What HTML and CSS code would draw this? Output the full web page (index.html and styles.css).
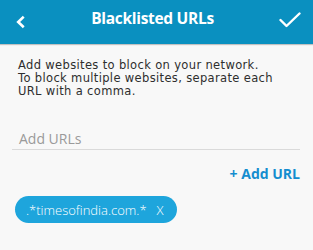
FILE: index.html
```html
<!DOCTYPE html>
<html>
<head>
<meta charset="utf-8">
<link rel="stylesheet" href="styles.css">
</head>
<body>
<div class="app">
  <header class="bar">
    <button class="icon-btn back" aria-label="Back">
      <svg width="12" height="14" viewBox="0 0 12 14"><path d="M8.8 2.6 L4.2 7 L8.8 11.4" fill="none" stroke="#fff" stroke-width="2.6" stroke-linecap="square"/></svg>
    </button>
    <h1 class="title">Blacklisted URLs</h1>
    <button class="icon-btn done" aria-label="Done">
      <svg width="22" height="16" viewBox="0 0 22 16"><path d="M1.5 8 L7.5 14 L20.5 1.5" fill="none" stroke="#fff" stroke-width="2.4" stroke-linecap="round" stroke-linejoin="round"/></svg>
    </button>
  </header>
  <main class="content">
    <p class="desc"><span class="line">Add websites to block on your network.</span><span class="line">To block multiple websites, separate each</span><span class="line">URL with a comma.</span></p>
    <div class="field"><span class="placeholder">Add URLs</span></div>
    <div class="actions"><a class="add">+ Add URL</a></div>
    <div class="chips"><span class="chip"><span class="chip-text">.*timesofindia.com.*</span><span class="chip-x">X</span></span></div>
  </main>
</div>
</body>
</html>
```
FILE: styles.css
```css
html, body { margin: 0; padding: 0; }
body { width: 313px; height: 250px; overflow: hidden; background: #f8f8f8; font-family: "Open Sans", "Liberation Sans", sans-serif; }
.app { display: flex; flex-direction: column; height: 250px; }
.bar { height: 44px; flex: none; background: #0a90c0; display: flex; align-items: center; justify-content: space-between; padding: 0 12px; box-shadow: 0 1px 1px rgba(0,0,0,0.22); }
.icon-btn { background: none; border: 0; padding: 0; display: flex; align-items: center; }
.back { padding-left: 2px; margin-bottom: 1px; }
.done { margin-bottom: 4px; }
.title { margin: 0 0 8px; color: #fff; font-size: 15.5px; font-weight: 700; letter-spacing: -0.3px; }
.content { padding: 14.5px 13px 0 12px; }
.desc { margin: 0 0 0 6px; color: #2e2e2e; font-family: "DejaVu Sans", sans-serif; font-size: 11.5px; line-height: 13px; letter-spacing: 0.35px; }
.line { display: block; }
.field { margin-top: 33.5px; border-bottom: 1px solid #dadada; padding: 0 0 3px 7px; }
.placeholder { display: block; color: #9a9a9a; font-size: 14px; line-height: 15px; }
.actions { display: flex; justify-content: flex-end; margin-top: 16px; }
.add { color: #148dcf; font-weight: 700; font-size: 14px; line-height: 16px; }
.chips { display: flex; margin-top: 14px; padding-left: 3px; }
.chip { display: flex; align-items: center; height: 27px; background: #1ea5dc; border-radius: 14px; padding: 0 13px 0 11px; color: #fff; font-size: 13px; font-weight: 300; }
.chip-x { margin-left: 10px; font-size: 13px; }
```
